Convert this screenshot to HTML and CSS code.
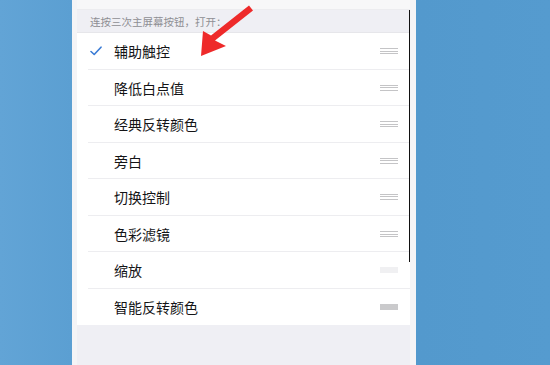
FILE: index.html
```html
<!DOCTYPE html>
<html lang="zh">
<head>
<meta charset="utf-8">
<link rel="stylesheet" href="styles.css">
</head>
<body>
<div class="page">
  <div class="panel">
    <div class="inner">
      <div class="topbar"></div>
      <div class="header">连按三次主屏幕按钮，打开：</div>
      <ul class="list">
        <li class="row"><span class="check"><svg width="12" height="10" viewBox="0 0 12 10"><path d="M1 5.5 L4.2 8.5 L11 1.2" fill="none" stroke="#3a7bd5" stroke-width="1.6" stroke-linecap="round" stroke-linejoin="round"/></svg></span><span class="label">辅助触控</span><span class="grip"></span></li>
        <li class="row"><span class="check"></span><span class="label">降低白点值</span><span class="grip"></span></li>
        <li class="row"><span class="check"></span><span class="label">经典反转颜色</span><span class="grip"></span></li>
        <li class="row"><span class="check"></span><span class="label">旁白</span><span class="grip"></span></li>
        <li class="row"><span class="check"></span><span class="label">切换控制</span><span class="grip"></span></li>
        <li class="row"><span class="check"></span><span class="label">色彩滤镜</span><span class="grip"></span></li>
        <li class="row"><span class="check"></span><span class="label">缩放</span><span class="grip faint"></span></li>
        <li class="row last"><span class="check"></span><span class="label">智能反转颜色</span><span class="grip solid"></span></li>
      </ul>
      <div class="footer"></div>
      <div class="edge"></div>
    </div>
  </div>
  <svg class="arrow" width="60" height="60" viewBox="0 0 60 60">
    <polygon points="1,56 3,31 11,35.6 49,5.4 53,10.6 15,40.4 26,46" fill="#ee2a2a"/>
  </svg>
</div>
</body>
</html>
```
FILE: styles.css
```css
html, body {
  margin: 0;
  padding: 0;
}
body {
  background: #5599cd;
  width: 550px;
  height: 365px;
  overflow: hidden;
  font-family: "Noto Sans CJK SC", "Noto Sans", sans-serif;
}
.page {
  position: relative;
  width: 550px;
  height: 365px;
  background: linear-gradient(to right, #62a4d6 0, #5b9fd2 72px, #5399cd 420px, #559bcf 550px);
}
.panel {
  position: absolute;
  left: 72px;
  top: 0;
  width: 344px;
  height: 365px;
  background: #f4f4f6;
}
.inner {
  position: relative;
  margin-left: 5px;
  width: 333px;
  height: 365px;
  display: flex;
  flex-direction: column;
}
.topbar {
  height: 10px;
  background: #f7f7f8;
  border-bottom: 1px solid #ececef;
  box-sizing: border-box;
}
.header {
  height: 23px;
  background: #efeff4;
  color: #8e8e93;
  font-size: 10.5px;
  line-height: 23px;
  padding-left: 13px;
  box-sizing: border-box;
  border-bottom: 1px solid #e6e6ea;
}
.list {
  list-style: none;
  margin: 0;
  padding: 0;
  background: #ffffff;
}
.row {
  height: 36.5px;
  display: flex;
  align-items: center;
  position: relative;
  box-sizing: border-box;
}
.row::after {
  content: "";
  position: absolute;
  left: 11px;
  right: 0;
  bottom: 0;
  height: 1px;
  background: #ededf0;
}
.row.last::after {
  display: none;
}
.check {
  width: 37px;
  padding-left: 13px;
  box-sizing: border-box;
  display: flex;
  align-items: center;
  flex: none;
}
.label {
  flex: 1;
  font-size: 14px;
  color: #141416;
}
.grip {
  width: 18px;
  height: 6px;
  margin-right: 12px;
  flex: none;
  background: repeating-linear-gradient(to bottom, #c4c4c6 0, #c4c4c6 1px, transparent 1px, transparent 2.5px);
}
.grip.faint {
  background: #f0f0f2;
}
.grip.solid {
  background: #cacacc;
}
.footer {
  flex: 1;
  background: #efeff4;
}
.edge {
  position: absolute;
  right: 0;
  top: 10px;
  width: 1px;
  height: 252px;
  background: #111111;
}
.arrow {
  position: absolute;
  left: 200px;
  top: 0;
}
```
